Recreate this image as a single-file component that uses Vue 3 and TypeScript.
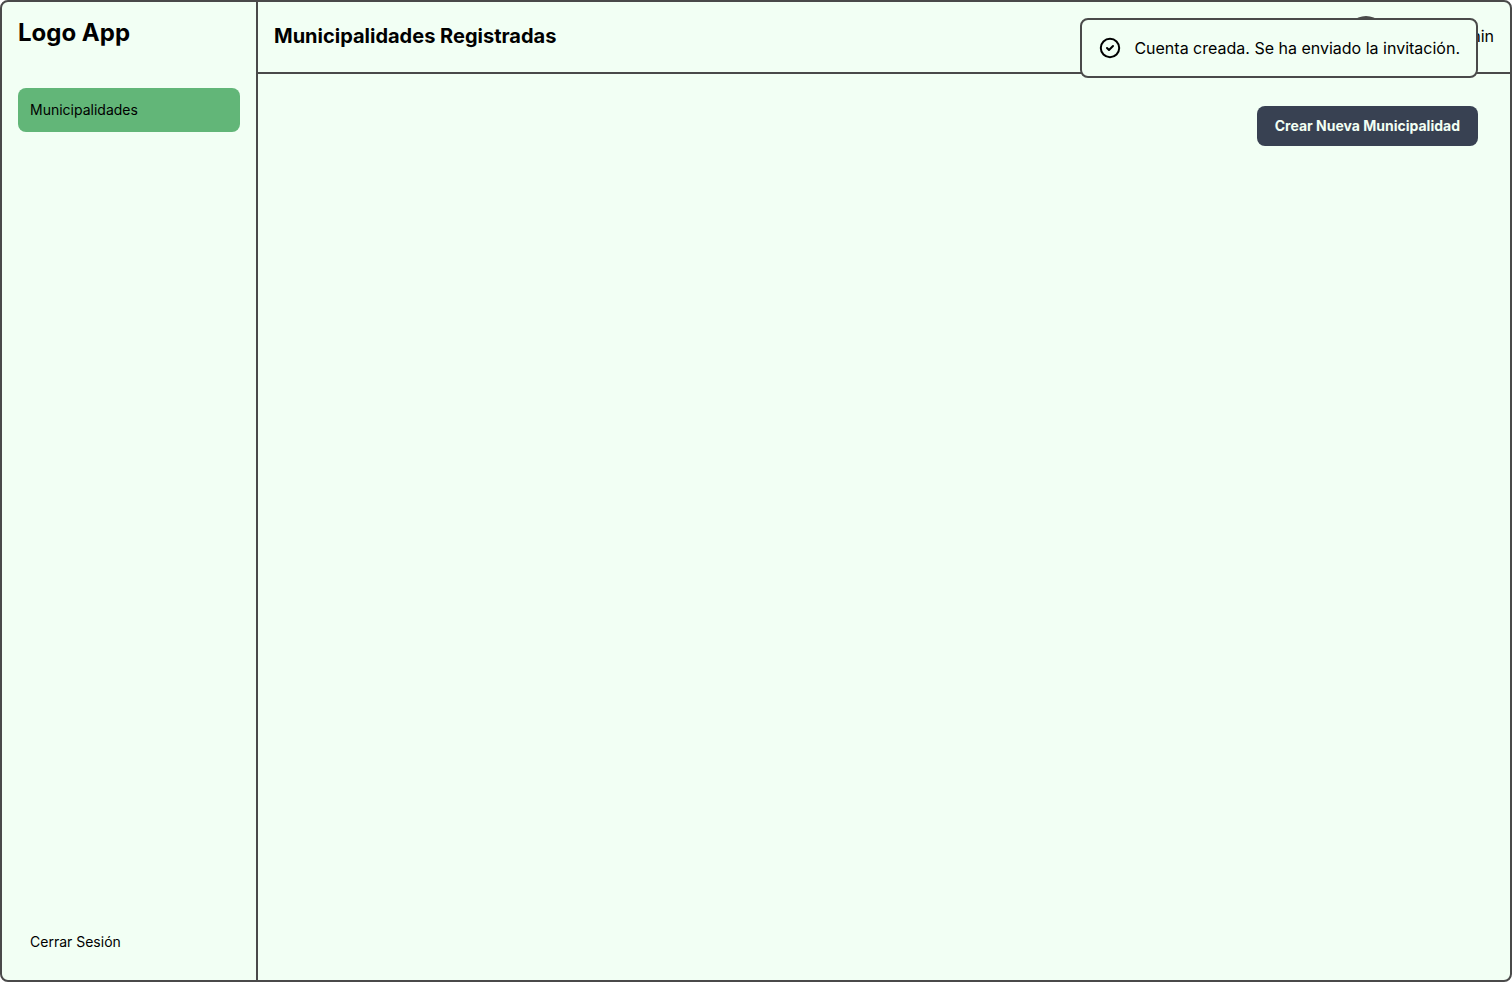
<script setup lang="ts">
import { ref } from 'vue'

interface NavItem {
  label: string
  href: string
}

const navItems: NavItem[] = [{ label: 'Municipalidades', href: '#municipalidades' }]
const current = ref('#municipalidades')
const toast = ref('Cuenta creada. Se ha enviado la invitación.')
</script>

<template>
  <div class="app">
    <aside class="sidebar">
      <div class="brand">Logo App</div>
      <nav class="nav" aria-label="Principal">
        <a
          v-for="item in navItems"
          :key="item.href"
          :href="item.href"
          class="nav-link"
          :class="{ active: item.href === current }"
          @click="current = item.href"
        >{{ item.label }}</a>
      </nav>
      <button type="button" class="nav-link logout">Cerrar Sesión</button>
    </aside>

    <div class="content">
      <header class="topbar">
        <h1 class="title">Municipalidades Registradas</h1>
        <div class="user">
          <span class="avatar"></span>
          <span>Super Admin</span>
        </div>
      </header>
      <main class="main">
        <button type="button" class="primary">Crear Nueva Municipalidad</button>
      </main>
    </div>

    <div v-if="toast" class="toast" role="status">
      <svg class="toast-icon" viewBox="0 0 24 24" aria-hidden="true">
        <circle cx="12" cy="12" r="9.2" />
        <path d="M9 12l2 2l4-4" />
      </svg>
      <span>{{ toast }}</span>
    </div>
  </div>
</template>

<style>
body {
  margin: 0;
}
</style>

<style scoped>
.app {
  position: relative;
  box-sizing: border-box;
  display: flex;
  min-height: 100vh;
  border: 2px solid #4a4a4a;
  border-radius: 8px;
  background: #f2fff4;
  color: #000;
  font-family: Inter, "Liberation Sans", sans-serif;
  font-size: 16px;
  line-height: 24px;
}

.sidebar {
  box-sizing: border-box;
  flex: none;
  display: flex;
  flex-direction: column;
  width: 256px;
  padding: 16px;
  border-right: 2px solid #4a4a4a;
}

.brand {
  margin-bottom: 40px;
  font-size: 24px;
  line-height: 30px;
  font-weight: 700;
}

.nav {
  flex: 1;
  display: flex;
  flex-direction: column;
  gap: 8px;
}

.nav-link {
  padding: 12px;
  border: 0;
  border-radius: 8px;
  background: none;
  color: inherit;
  font-family: inherit;
  font-size: 14px;
  line-height: 20px;
  text-align: left;
  text-decoration: none;
  cursor: pointer;
}

.active {
  background: #62b678;
}

.content {
  flex: 1;
  min-width: 0;
  display: flex;
  flex-direction: column;
}

.topbar {
  display: flex;
  align-items: center;
  justify-content: space-between;
  padding: 14px 16px 16px;
  border-bottom: 2px solid #4a4a4a;
}

.title {
  margin: 0;
  font-size: 20px;
  line-height: 28px;
  font-weight: 700;
}

.user {
  display: flex;
  align-items: center;
  gap: 10px;
}

.avatar {
  width: 40px;
  height: 40px;
  border-radius: 50%;
  background: #4a4a4a;
}

.main {
  display: flex;
  justify-content: flex-end;
  padding: 32px;
}

.primary {
  padding: 10px 18px;
  border: 0;
  border-radius: 8px;
  background: #384152;
  color: #f2fff4;
  font-family: inherit;
  font-size: 14px;
  line-height: 20px;
  font-weight: 700;
  cursor: pointer;
}

.toast {
  position: absolute;
  top: 16px;
  right: 32px;
  display: flex;
  align-items: center;
  gap: 12px;
  padding: 16px;
  border: 2px solid #4a4a4a;
  border-radius: 8px;
  background: #f2fff4;
}

.toast-icon {
  width: 24px;
  height: 24px;
  fill: none;
  stroke: #000;
  stroke-width: 2;
  stroke-linecap: round;
  stroke-linejoin: round;
}
</style>
